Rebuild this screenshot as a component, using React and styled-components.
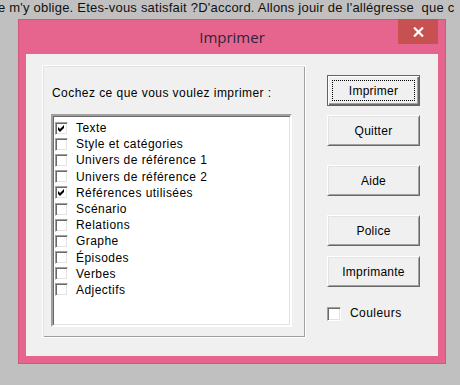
import React, { useState } from 'react';
import styled, { createGlobalStyle } from 'styled-components';

const GlobalStyle = createGlobalStyle`
  html, body {
    margin: 0;
    padding: 0;
  }

  body {
    width: 460px;
    height: 385px;
    overflow: hidden;
    background: #c0c0c0;
    font-family: "Liberation Sans", Arial, sans-serif;
  }
`;

const Page = styled.div`
  width: 460px;
  height: 385px;
  overflow: hidden;
`;

const BackText = styled.div`
  height: 19px;
  margin-left: -2px;
  font-size: 13px;
  line-height: 16px;
  letter-spacing: 0.22px;
  color: #111;
  white-space: pre;
  overflow: hidden;
`;

const Window = styled.div`
  box-sizing: border-box;
  width: 428px;
  height: 345px;
  margin-left: 18px;
  padding: 0 7px 7px;
  display: flex;
  flex-direction: column;
  background: #e6658f;
  border: 1px solid #d2577f;
`;

const TitleBar = styled.div`
  height: 34px;
  display: grid;
  grid-template-columns: 1fr auto 1fr;
`;

const Title = styled.div`
  grid-column: 2;
  padding-top: 7px;
  font-family: "Open Sans", "Noto Sans", sans-serif;
  font-size: 15px;
  line-height: 20px;
  color: #2c2638;
`;

const CloseButton = styled.button`
  grid-column: 3;
  justify-self: end;
  align-self: start;
  width: 40px;
  height: 25px;
  margin-top: -1px;
  padding: 0;
  border: none;
  background: #c75050;
  display: flex;
  align-items: center;
  justify-content: center;
`;

const Client = styled.div`
  flex: 1;
  display: flex;
  background: #f0f0f0;
  padding: 11px 0 0 16px;
  font-size: 12px;
  letter-spacing: 0.45px;
  color: #000;
`;

const GroupBox = styled.div`
  box-sizing: border-box;
  width: 264px;
  height: 273px;
  padding: 20px 0 0 8px;
  border: 1px solid #fff;
  box-shadow: inset 1px 1px #e3e3e3, inset -1px -1px #a0a0a0;
`;

const Label = styled.div`
  line-height: 14px;
  margin-left: 1px;
  white-space: nowrap;
`;

const ListBox = styled.div`
  box-sizing: border-box;
  width: 241px;
  height: 213px;
  margin-top: 14px;
  padding: 4px 0 0 2px;
  background: #fff;
  border: 2px solid;
  border-color: #a0a0a0 #fff #fff #a0a0a0;
  box-shadow: inset 1px 1px #696969, inset -1px -1px #e3e3e3;
`;

const Row = styled.div`
  height: 16.2px;
  display: flex;
  align-items: center;
  gap: 8px;
  white-space: nowrap;
`;

const Box = styled.span`
  box-sizing: border-box;
  flex: none;
  width: ${(p) => p.$size}px;
  height: ${(p) => p.$size}px;
  background: #fff;
  border: 1px solid;
  border-color: #a0a0a0 #fff #fff #a0a0a0;
  box-shadow: inset 1px 1px #696969, inset -1px -1px #e3e3e3;
  display: flex;
  align-items: center;
  justify-content: center;
`;

const Side = styled.div`
  display: flex;
  flex-direction: column;
  margin-left: 21px;
  padding-top: 10px;
`;

const Button = styled.button`
  box-sizing: border-box;
  position: relative;
  width: 93px;
  height: 31px;
  margin-top: ${(p) => p.$gap}px;
  padding: 0;
  font-family: "Liberation Sans", Arial, sans-serif;
  font-size: 12px;
  letter-spacing: 0.25px;
  color: #000;
  background: #f0f0f0;
  border: 1px solid;
  border-color: ${(p) => (p.$default ? '#646464' : '#fff #696969 #696969 #fff')};
  box-shadow: ${(p) =>
    p.$default
      ? 'inset 1px 1px #fff, inset -1px -1px #696969, inset -2px -2px #a0a0a0'
      : 'inset 1px 1px #e3e3e3, inset -1px -1px #a0a0a0'};

  &::after {
    content: '';
    display: ${(p) => (p.$default ? 'block' : 'none')};
    position: absolute;
    inset: 4px;
    border: 1px dotted #000;
  }
`;

const CheckRow = styled.label`
  display: flex;
  align-items: center;
  gap: 9px;
  margin-top: 19px;
  line-height: 15px;
`;

function Check({ checked, size = 13 }) {
  return (
    <Box $size={size}>
      {checked && (
        <svg width='7' height='7' viewBox='0 0 7 7'>
          <path d='M0 2 L2 4 L6 0 L6 3 L2 7 L0 5 Z' fill='#000' />
        </svg>
      )}
    </Box>
  );
}

const items = [
  { label: 'Texte', checked: true },
  { label: 'Style et catégories' },
  { label: 'Univers de référence 1' },
  { label: 'Univers de référence 2' },
  { label: 'Références utilisées', checked: true },
  { label: 'Scénario' },
  { label: 'Relations' },
  { label: 'Graphe' },
  { label: 'Épisodes' },
  { label: 'Verbes' },
  { label: 'Adjectifs' },
];

const buttons = [
  { label: 'Imprimer', gap: 0, isDefault: true },
  { label: 'Quitter', gap: 9 },
  { label: 'Aide', gap: 19 },
  { label: 'Police', gap: 19 },
  { label: 'Imprimante', gap: 10 },
];

export default function App() {
  const [colours] = useState(false);

  return (
    <Page>
      <GlobalStyle />
      <BackText>
        {"e m'y oblige. Etes-vous satisfait ?D'accord. Allons jouir de l'allégresse  que c"}
      </BackText>
      <Window>
        <TitleBar>
          <Title>Imprimer</Title>
          <CloseButton>
            <svg width='11' height='10' viewBox='0 0 11 10'>
              <path d='M1 0.5 L10 9.5 M10 0.5 L1 9.5' stroke='#fff' strokeWidth='2.2' />
            </svg>
          </CloseButton>
        </TitleBar>
        <Client>
          <GroupBox>
            <Label>Cochez ce que vous voulez imprimer :</Label>
            <ListBox>
              {items.map((item) => (
                <Row key={item.label}>
                  <Check checked={item.checked} />
                  {item.label}
                </Row>
              ))}
            </ListBox>
          </GroupBox>
          <Side>
            {buttons.map((b) => (
              <Button key={b.label} $gap={b.gap} $default={b.isDefault}>
                {b.label}
              </Button>
            ))}
            <CheckRow>
              <Check checked={colours} size={14} />
              Couleurs
            </CheckRow>
          </Side>
        </Client>
      </Window>
    </Page>
  );
}
